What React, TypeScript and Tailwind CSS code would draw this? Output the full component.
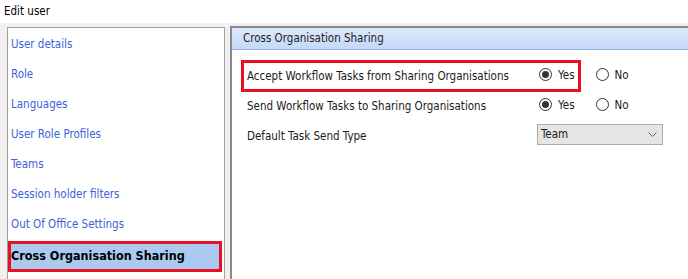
import React from "react";

const items = [
  "User details",
  "Role",
  "Languages",
  "User Role Profiles",
  "Teams",
  "Session holder filters",
  "Out Of Office Settings",
];

function Radio({ checked, label }: { checked: boolean; label: string }) {
  return (
    <div className="flex items-center">
      <div className="w-[13px] h-[13px] rounded-full border border-[#333] bg-white flex items-center justify-center -mt-[3px]">
        {checked && <div className="w-[7px] h-[7px] rounded-full bg-[#333]" />}
      </div>
      <span className="ml-[6px]">{label}</span>
    </div>
  );
}

function Row({ label, highlight }: { label: string; highlight?: boolean }) {
  return (
    <div className="flex items-center h-[30px]">
      <div
        className={`flex items-center h-[32px] border-[3px] pl-[3px] pr-[3px] ${
          highlight ? "border-[#e81123]" : "border-transparent"
        }`}
      >
        <span className="w-[292px] pt-[1px]">{label}</span>
        <Radio checked label="Yes" />
      </div>
      <div className="ml-[15px]">
        <Radio checked={false} label="No" />
      </div>
    </div>
  );
}

export default function App() {
  return (
    <div
      className="w-[688px] h-[279px] overflow-hidden bg-[#f0f0f0] text-[11.5px] text-[#1a1a1a]"
      style={{ fontFamily: '"DejaVu Sans Condensed", "Liberation Sans", Arial, sans-serif' }}
    >
      <div className="h-[23px] bg-white pl-[4px] pt-[1px] flex items-center text-black">Edit user</div>
      <div className="flex pl-[7px] pt-[3px]">
        <div className="mt-[1px] w-[218px] h-[300px] border border-[#a0a0a0] bg-white shrink-0 pt-[2px]">
          {items.map((t) => (
            <div key={t} className="h-[30px] flex items-center pl-[3px] text-[#3c62d8]">
              {t}
            </div>
          ))}
          <div className="mt-[1px] mr-[2px] h-[31px] border-[3px] border-[#e81123] bg-[#aacbef] flex items-center font-bold text-[12.5px] text-black">
            Cross Organisation Sharing
          </div>
        </div>
        <div className="ml-[5px] flex-1 h-[300px] border-l-2 border-t-2 border-[#8a8a8a] bg-white">
          <div className="h-[22px] bg-gradient-to-b from-[#dde9fb] to-[#c3d9f7] border-b border-[#8fb2e0] flex items-center pl-[11px] pt-[1px] text-[#222]">
            Cross Organisation Sharing
          </div>
          <div className="pt-[11px] pl-[9px]">
            <Row label="Accept Workflow Tasks from Sharing Organisations" highlight />
            <Row label="Send Workflow Tasks to Sharing Organisations" />
            <div className="flex items-center h-[30px] pl-[6px]">
              <span className="w-[290px] pt-[1px]">Default Task Send Type</span>
              <div className="w-[126px] h-[21px] -mt-[3px] border border-[#acacac] bg-[#e5e5e5] flex items-center justify-between pl-[3px] pr-[5px]">
                <span>Team</span>
                <svg width="9" height="6" viewBox="0 0 9 6">
                  <path d="M0.5 0.5 L4.5 4.5 L8.5 0.5" fill="none" stroke="#666" strokeWidth="1" />
                </svg>
              </div>
            </div>
          </div>
        </div>
      </div>
    </div>
  );
}
